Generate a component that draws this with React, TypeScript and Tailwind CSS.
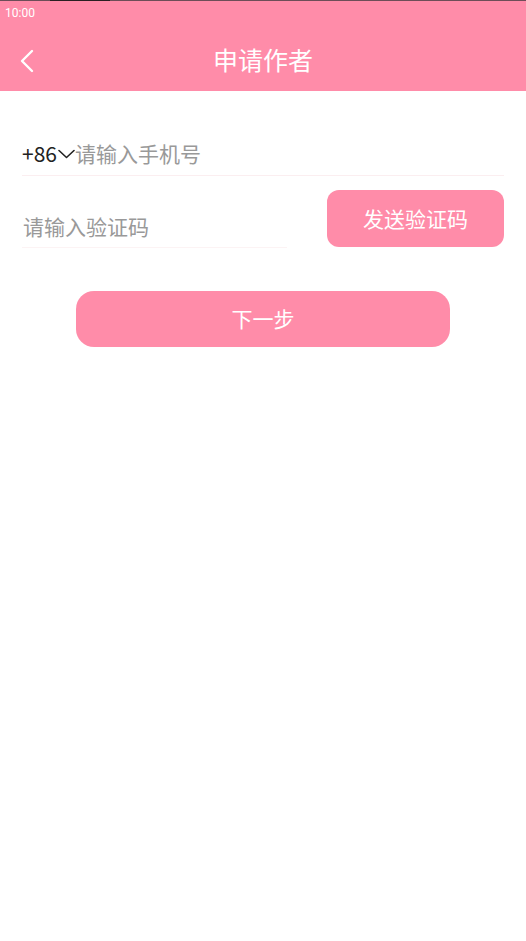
import React from 'react'

const font = { fontFamily: '"Noto Sans CJK SC", "Noto Sans", sans-serif' }

function BackIcon() {
  return (
    <svg width="14" height="24" viewBox="0 0 14 24" fill="none">
      <path d="M12 2 L2 12 L12 22" stroke="white" strokeWidth="2.4" strokeLinecap="round" strokeLinejoin="round" />
    </svg>
  )
}

function DownIcon() {
  return (
    <svg width="17" height="10" viewBox="0 0 17 10" fill="none">
      <path d="M1 1.5 L8.5 8.5 L16 1.5" stroke="#222" strokeWidth="1.6" strokeLinecap="round" strokeLinejoin="round" />
    </svg>
  )
}

export default function App() {
  return (
    <div className="w-[526px] h-[941px] bg-white" style={font}>
      <header className="bg-[#ff8ca9] h-[91px] flex flex-col">
        <div className="flex h-px">
          <div className="w-[50px] bg-[#6e4d58]" />
          <div className="w-[60px] bg-[#2a1f22]" />
          <div className="flex-1 bg-[#6e4d58]" />
        </div>
        <div className="h-[24px] flex items-center px-[5px]">
          <span className="text-[12px] text-white" style={{ fontFamily: 'Roboto, sans-serif' }}>10:00</span>
        </div>
        <div className="h-[66px] pt-[4px] relative flex items-center justify-center">
          <button type="button" className="absolute left-[20px] top-[24px]">
            <BackIcon />
          </button>
          <h1 className="text-[25px] text-white font-normal">申请作者</h1>
        </div>
      </header>

      <main className="px-[22px] pt-[41px]">
        <div className="h-[44px] flex items-center border-b border-[#fbeef0]">
          <span className="text-[21px] text-[#222]">+86</span>
          <span className="ml-[1px] flex items-center">
            <DownIcon />
          </span>
          <span className="text-[21px] text-[#999]">请输入手机号</span>
        </div>

        <div className="mt-[14px] flex items-end justify-between">
          <div className="w-[265px] h-[44px] pt-[3px] flex items-center border-b border-[#fcf3f4]">
            <span className="text-[21px] text-[#999] ml-[1px]">请输入验证码</span>
          </div>
          <button
            type="button"
            className="w-[177px] h-[57px] mb-[1px] rounded-[12px] bg-[#ff8ca9] text-white text-[21px] flex items-center justify-center"
          >
            发送验证码
          </button>
        </div>

        <button
          type="button"
          className="mt-[43px] mx-auto w-[374px] h-[56px] rounded-[18px] bg-[#ff8ca9] text-white text-[21px] flex items-center justify-center"
        >
          下一步
        </button>
      </main>
    </div>
  )
}
